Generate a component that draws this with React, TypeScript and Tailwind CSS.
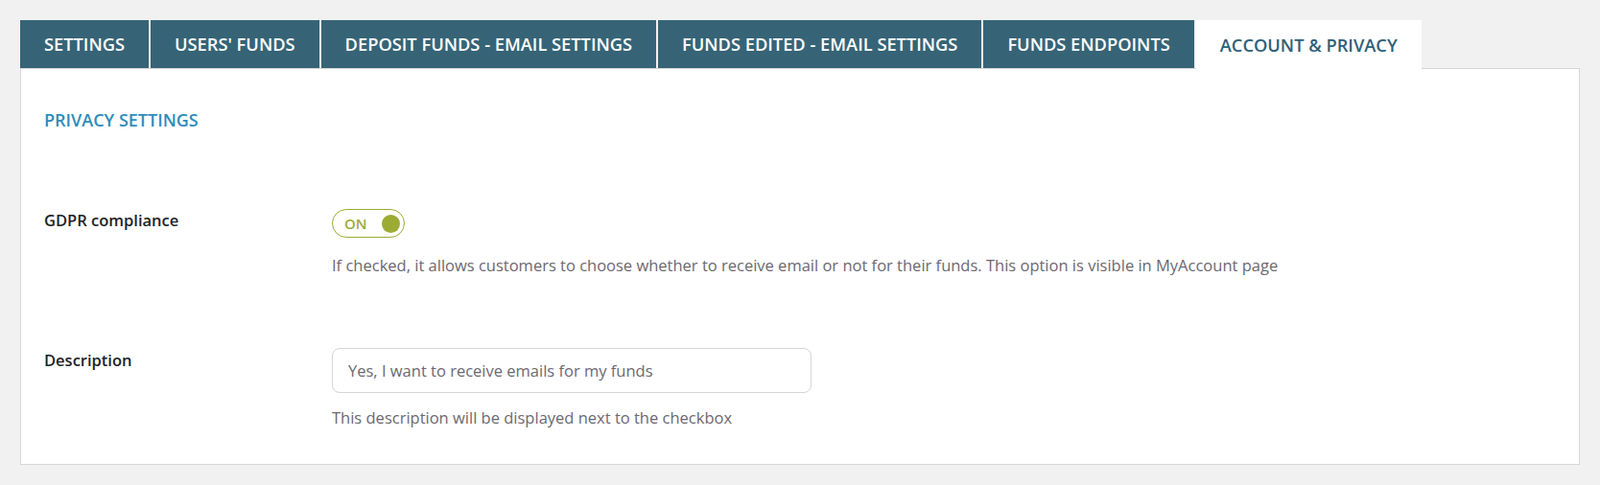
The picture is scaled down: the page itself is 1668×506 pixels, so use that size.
import { useState } from "react";

const tabs = [
  { label: "SETTINGS" },
  { label: "USERS' FUNDS" },
  { label: "DEPOSIT FUNDS - EMAIL SETTINGS" },
  { label: "FUNDS EDITED - EMAIL SETTINGS" },
  { label: "FUNDS ENDPOINTS" },
  { label: "ACCOUNT & PRIVACY", active: true },
];

function Toggle({ on, onChange }: { on: boolean; onChange: () => void }) {
  return (
    <button
      type="button"
      onClick={onChange}
      className="flex h-[30px] w-[76px] items-center justify-between rounded-full border border-[#9cab33] bg-white pl-[12px] pr-[4px]"
    >
      <span className="text-[15px] font-semibold text-[#9cab33]">{on ? "ON" : "OFF"}</span>
      <span className="h-[19px] w-[19px] rounded-full bg-[#9cab33]" />
    </button>
  );
}

export default function App() {
  const [gdpr, setGdpr] = useState(true);
  const [desc, setDesc] = useState("Yes, I want to receive emails for my funds");

  return (
    <div className="min-h-[506px] bg-[#f1f1f1] px-[21px] pt-[21px] pb-[22px] font-['Open_Sans',sans-serif]">
      <nav className="flex items-end gap-[2px]">
        {tabs.map((tab) => (
          <div
            key={tab.label}
            className={
              tab.active
                ? "relative z-10 -mb-px flex h-[51px] items-center bg-white px-[25px] text-[18.25px] font-semibold text-[#2f6077]"
                : "flex h-[50px] items-center bg-[#366476] px-[25px] text-[18.25px] font-semibold text-white"
            }
          >
            {tab.label}
          </div>
        ))}
      </nav>

      <div className="border border-[#d6d6d6] bg-white px-[24px] pt-[42px] pb-[36px]">
        <h2 className="text-[18px] leading-[22px] font-semibold text-[#2e8cba]">PRIVACY SETTINGS</h2>

        <div className="mt-[82px] grid grid-cols-[300px_1fr]">
          <div className="text-[16.5px] leading-[24px] font-semibold text-[#1d2327]">GDPR compliance</div>
          <div>
            <Toggle on={gdpr} onChange={() => setGdpr(!gdpr)} />
            <p className="mt-[17px] text-[16.5px] leading-[24px] text-[#6c6870]">
              If checked, it allows customers to choose whether to receive email or not for their funds. This option is visible in MyAccount page
            </p>
          </div>
        </div>

        <div className="mt-[74px] grid grid-cols-[300px_1fr]">
          <div className="pt-px text-[16.5px] leading-[24px] font-semibold text-[#1d2327]">Description</div>
          <div>
            <input
              value={desc}
              onChange={(e) => setDesc(e.target.value)}
              className="h-[47px] w-[500px] rounded-[8px] border border-[#d5d5d5] px-[16px] text-[16.5px] text-[#6c6870] outline-none"
            />
            <p className="mt-[14px] text-[16.5px] leading-[24px] text-[#6c6870]">This description will be displayed next to the checkbox</p>
          </div>
        </div>
      </div>
    </div>
  );
}
